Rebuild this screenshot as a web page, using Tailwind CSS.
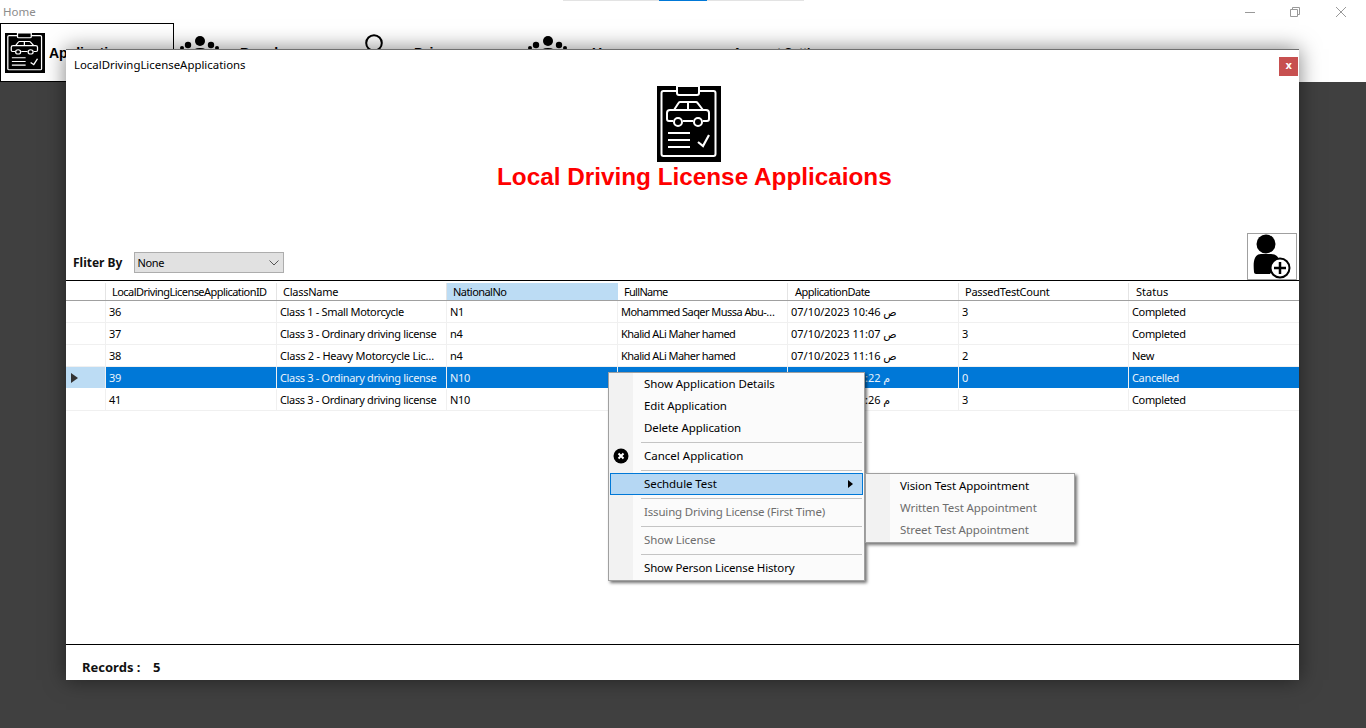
<!DOCTYPE html>
<html>
<head>
<meta charset="utf-8">
<script src="https://cdn.jsdelivr.net/npm/@tailwindcss/browser@4"></script>
</head>
<body class="m-0">
<svg width="0" height="0" class="absolute">
  <defs>
    <symbol id="lic" viewBox="0 0 64 76" preserveAspectRatio="none">
      <rect width="64" height="76" fill="#000"/>
      <rect x="4.5" y="5" width="54" height="65" rx="2" fill="none" stroke="#fff" stroke-width="2"/>
      <path d="M20 0v7a2 2 0 0 0 2 2h18a2 2 0 0 0 2-2V0z" fill="#000" stroke="#fff" stroke-width="2"/>
      <path d="M16 35h-4a2 2 0 0 1-2-2v-6a3 3 0 0 1 3-3h4l4.500-7a2 2 0 0 1 1.500-1h16a2 2 0 0 1 1.500.8l5.500 7.200h3a3 3 0 0 1 3 3v6a2 2 0 0 1-2 2h-4M26 35h10M17 24h29M31 16v8" fill="none" stroke="#fff" stroke-width="2" stroke-linejoin="round"/>
      <circle cx="21" cy="36" r="4" fill="none" stroke="#fff" stroke-width="2"/>
      <circle cx="41" cy="36" r="4" fill="none" stroke="#fff" stroke-width="2"/>
      <path d="M11 47h22M11 54h22M11 61h22" stroke="#fff" stroke-width="2"/>
      <path d="M41 56l5 4 6-11" fill="none" stroke="#fff" stroke-width="2.200"/>
    </symbol>
    <symbol id="grp" viewBox="0 0 40 20">
      <circle cx="20" cy="7" r="5"/>
      <circle cx="8" cy="11" r="3.200"/>
      <circle cx="31" cy="11" r="3.200"/>
      <circle cx="2" cy="14" r="2"/>
      <circle cx="37" cy="14" r="2"/>
      <ellipse cx="20" cy="18" rx="8" ry="4"/>
      <ellipse cx="7" cy="18" rx="4" ry="3"/>
      <ellipse cx="32" cy="18" rx="4" ry="3"/>
    </symbol>
  </defs>
</svg>

<div class="relative w-[1366px] h-[728px] overflow-hidden bg-[#404040] font-['Noto_Sans','DejaVu_Sans',sans-serif] text-[11px] tracking-[-0.34px] text-black">

  <!-- main window chrome -->
  <div class="bg-white h-[82px] flex flex-col tracking-normal">
    <div class="relative h-[23px] flex items-center justify-between pl-[3px]">
      <span class="text-[11.5px] text-[#8c8c8c]">Home</span>
      <div class="absolute left-[563px] top-0 w-[241px] h-px bg-[#e3e3e3]">
        <div class="ml-[96px] w-[48px] h-px bg-[#0078d7]"></div>
      </div>
      <div class="flex items-center gap-[35px] pr-[20px]">
        <svg width="10" height="10" viewBox="0 0 10 10"><path d="M0 5.500h10" stroke="#999"/></svg>
        <svg width="10" height="10" viewBox="0 0 10 10" fill="none" stroke="#999"><path d="M.5 2.500h7v7h-7zM2.500 2.500v-2h7v7h-2"/></svg>
        <svg class="ml-px" width="10" height="10" viewBox="0 0 10 10"><path d="M0 0l10 10M10 0L0 10" stroke="#999"/></svg>
      </div>
    </div>
    <div class="flex h-[59px] font-['Liberation_Sans',sans-serif] font-bold text-[14px]">
      <div class="w-[174px] border border-black flex items-center pl-[4px] gap-[4px]">
        <svg width="40" height="40"><use href="#lic"/></svg>
        <span class="mt-[1px]">Applications</span>
      </div>
      <div class="w-[174px] flex items-center relative">
        <svg class="absolute left-[6px] top-[11px]" width="40" height="20"><use href="#grp"/></svg>
        <span class="ml-[66px] mt-[1px]">People</span>
      </div>
      <div class="w-[174px] flex items-center relative">
        <svg class="absolute left-[17px] top-[11px]" width="18" height="18" viewBox="0 0 18 18"><circle cx="9" cy="9" r="7.800" fill="none" stroke="#000" stroke-width="2"/></svg>
        <span class="ml-[66px] mt-[1px]">Drivers</span>
      </div>
      <div class="w-[174px] flex items-center relative">
        <svg class="absolute left-[6px] top-[11px]" width="40" height="20"><use href="#grp"/></svg>
        <span class="ml-[70px] mt-[1px]">Users</span>
      </div>
      <div class="w-[174px] flex items-center">
        <span class="ml-[37px] text-[12px]">Account Settings</span>
      </div>
    </div>
  </div>

  <!-- child window -->
  <div class="absolute left-[66px] top-[49px] w-[1233px] h-[631px] bg-white border-t border-[#707070] flex flex-col shadow-[0_0_20px_rgba(0,0,0,0.5)]">
    <div class="h-[36px] flex items-start justify-between pl-[8px] pr-px pt-[7px]">
      <span class="text-[11.4px] tracking-normal leading-[16px]">LocalDrivingLicenseApplications</span>
      <div class="w-[19px] h-[19px] bg-[#c75050] text-white font-bold text-[10px] leading-[17px] text-center font-['DejaVu_Sans',sans-serif]">x</div>
    </div>
    <svg class="ml-[591px] shrink-0" width="64" height="76"><use href="#lic"/></svg>
    <div class="ml-[431px] mt-[2px] h-[26px] whitespace-nowrap font-['Liberation_Sans',sans-serif] font-bold text-[24.3px] tracking-normal leading-[26px] text-[#ff0000]">Local Driving License Applicaions</div>
    <div class="h-[90px] flex items-end justify-between pl-[7px] pr-[2px]">
      <div class="flex items-center gap-[12px] pb-[7px]">
        <span class="font-bold text-[12px] text-[#111] tracking-normal">Fliter By</span>
        <div class="w-[150px] h-[21px] bg-[#e1e1e1] border border-[#adadad] flex items-center justify-between pl-[2px] pr-[3px]">
          <span class="mt-px">None</span>
          <svg width="12" height="8" viewBox="0 0 12 8"><path d="M1.500 1.500l4.500 4.500 4.500-4.500" fill="none" stroke="#555"/></svg>
        </div>
      </div>
      <div class="w-[50px] h-[47px] border border-[#a0a0a0] bg-white">
        <svg width="48" height="45" viewBox="0 0 48 45">
          <circle cx="18" cy="10" r="9.500"/>
          <path d="M6 38c-1-10 0-18 7-18h10c5 0 8 3 8 7l-9 13H8c-1 0-2-1-2-2z"/>
          <circle cx="32" cy="34" r="9.500" fill="#fff" stroke="#000" stroke-width="2"/>
          <path d="M32 28v12M26 34h12" stroke="#000" stroke-width="2.500"/>
        </svg>
      </div>
    </div>

    <!-- grid -->
    <div class="border-t border-black">
      <div class="pt-[2px] grid grid-cols-[40px_171px_170px_171px_170px_171px_170px_1fr] h-[20px] border-b border-[#a0a0a0] leading-[17px]">
        <div class="border-r border-[#e4e4e4]"></div>
        <div class="border-r border-[#e4e4e4] pl-[6px] whitespace-nowrap overflow-hidden tracking-[-0.55px]">LocalDrivingLicenseApplicationID</div>
        <div class="border-r border-[#e4e4e4] pl-[6px] tracking-[-0.25px]">ClassName</div>
        <div class="bg-[#bcdcf4] pl-[6px] tracking-[-0.55px]">NationalNo</div>
        <div class="border-r border-[#e4e4e4] pl-[6px] tracking-[-0.7px]">FullName</div>
        <div class="border-r border-[#e4e4e4] pl-[7px] tracking-[-0.5px]">ApplicationDate</div>
        <div class="border-r border-[#e4e4e4] pl-[6px] tracking-[-0.25px]">PassedTestCount</div>
        <div class="pl-[7px] tracking-[0px]">Status</div>
      </div>
      <div class="grid grid-cols-[40px_171px_170px_171px_170px_171px_170px_1fr] h-[22px] border-b border-[#f0f0f0] leading-[21px] divide-x divide-[#f0f0f0] [&>div]:pl-[3px] [&>div]:whitespace-nowrap [&>div]:overflow-hidden">
        <div></div><div>36</div><div>Class 1 - Small Motorcycle</div><div>N1</div><div class="tracking-[-0.55px]">Mohammed Saqer Mussa Abu-…</div><div>07/10/2023 10:46 ص</div><div>3</div><div>Completed</div>
      </div>
      <div class="grid grid-cols-[40px_171px_170px_171px_170px_171px_170px_1fr] h-[22px] border-b border-[#f0f0f0] leading-[21px] divide-x divide-[#f0f0f0] [&>div]:pl-[3px] [&>div]:whitespace-nowrap [&>div]:overflow-hidden">
        <div></div><div>37</div><div>Class 3 - Ordinary driving license</div><div>n4</div><div class="tracking-[-0.55px]">Khalid ALi Maher hamed</div><div>07/10/2023 11:07 ص</div><div>3</div><div>Completed</div>
      </div>
      <div class="grid grid-cols-[40px_171px_170px_171px_170px_171px_170px_1fr] h-[22px] border-b border-[#f0f0f0] leading-[21px] divide-x divide-[#f0f0f0] [&>div]:pl-[3px] [&>div]:whitespace-nowrap [&>div]:overflow-hidden">
        <div></div><div>38</div><div class="tracking-[-0.25px]">Class 2 - Heavy Motorcycle Lic…</div><div>n4</div><div class="tracking-[-0.55px]">Khalid ALi Maher hamed</div><div>07/10/2023 11:16 ص</div><div>2</div><div>New</div>
      </div>
      <div class="grid grid-cols-[40px_171px_170px_171px_170px_171px_170px_1fr] h-[22px] border-b border-white bg-[#0078d7] text-[#eaf3fb] leading-[21px] divide-x divide-[#f0f0f0] [&>div]:pl-[3px] [&>div]:whitespace-nowrap [&>div]:overflow-hidden">
        <div class="bg-[#bcdcf4] flex items-center"><svg class="ml-[2px]" width="7" height="10" viewBox="0 0 7 10"><path d="M0 0l7 5-7 5z" fill="#333"/></svg></div><div>39</div><div>Class 3 - Ordinary driving license</div><div>N10</div><div></div><div>07/10/2023 11:22 م</div><div>0</div><div>Cancelled</div>
      </div>
      <div class="grid grid-cols-[40px_171px_170px_171px_170px_171px_170px_1fr] h-[22px] border-b border-[#f0f0f0] leading-[21px] divide-x divide-[#f0f0f0] [&>div]:pl-[3px] [&>div]:whitespace-nowrap [&>div]:overflow-hidden">
        <div></div><div>41</div><div>Class 3 - Ordinary driving license</div><div>N10</div><div></div><div>07/10/2023 11:26 م</div><div>3</div><div>Completed</div>
      </div>
    </div>

    <div class="mt-auto h-[36px] border-t border-black flex items-center pl-[16px] pt-[11px] font-bold text-[13px] text-[#111] tracking-normal">
      <span class="w-[71px]">Records :</span><span>5</span>
    </div>
  </div>

  <!-- context menu -->
  <div class="absolute left-[608px] top-[372px] w-[257px] h-[209px] bg-[#fbfbfb] border border-[#a0a0a0] shadow-[2px_2px_3px_rgba(0,0,0,0.55)] text-[11.5px] tracking-[-0.08px] py-px">
    <div class="absolute left-0 top-0 bottom-0 w-[24px] bg-[#f2f2f2]"></div>
    <div class="relative flex flex-col h-full">
      <div class="h-[22px] leading-[20px] pl-[35px]">Show Application Details</div>
      <div class="h-[22px] leading-[20px] pl-[35px]">Edit Application</div>
      <div class="h-[22px] leading-[20px] pl-[35px]">Delete Application</div>
      <div class="h-[6px] flex items-center pl-[32px] pr-[2px]"><div class="w-full h-px bg-[#c4c4c4]"></div></div>
      <div class="h-[22px] pl-[4px] flex items-center">
        <svg width="16" height="16" viewBox="0 0 16 16"><circle cx="8" cy="8" r="7.500"/><path d="M5.500 5.500l5 5M10.500 5.500l-5 5" stroke="#fff" stroke-width="2"/></svg>
        <span class="ml-[15px] -mt-[1px] tracking-[0px]">Cancel Application</span>
      </div>
      <div class="h-[6px] flex items-center pl-[32px] pr-[2px]"><div class="w-full h-px bg-[#c4c4c4]"></div></div>
      <div class="h-[22px] mx-px bg-[#b5d7f3] border border-[#0078d7] flex items-center justify-between pl-[33px] pr-[9px]">
        <span class="-mt-[2px]">Sechdule Test</span>
        <svg width="5" height="8" viewBox="0 0 5 8"><path d="M0 0l5 4-5 4z"/></svg>
      </div>
      <div class="h-[6px] flex items-center pl-[32px] pr-[2px]"><div class="w-full h-px bg-[#c4c4c4]"></div></div>
      <div class="h-[22px] leading-[22px] pl-[35px] text-[#6d6d6d] tracking-[-0.17px]">Issuing Driving License (First Time)</div>
      <div class="h-[6px] flex items-center pl-[32px] pr-[2px]"><div class="w-full h-px bg-[#c4c4c4]"></div></div>
      <div class="h-[22px] leading-[22px] pl-[35px] text-[#6d6d6d]">Show License</div>
      <div class="h-[6px] flex items-center pl-[32px] pr-[2px]"><div class="w-full h-px bg-[#c4c4c4]"></div></div>
      <div class="h-[22px] leading-[22px] pl-[35px] tracking-[-0.16px]">Show Person License History</div>
    </div>
  </div>

  <!-- submenu -->
  <div class="absolute left-[865px] top-[473px] w-[210px] h-[70px] bg-[#fbfbfb] border border-[#a0a0a0] shadow-[2px_2px_3px_rgba(0,0,0,0.55)] text-[11.5px] tracking-[-0.1px] py-px">
    <div class="absolute left-0 top-0 bottom-0 w-[24px] bg-[#f2f2f2]"></div>
    <div class="relative">
      <div class="h-[22px] leading-[22px] pl-[34px]">Vision Test Appointment</div>
      <div class="h-[22px] leading-[22px] pl-[34px] text-[#6d6d6d]">Written Test Appointment</div>
      <div class="h-[22px] leading-[22px] pl-[34px] text-[#6d6d6d]">Street Test Appointment</div>
    </div>
  </div>
</div>
</body>
</html>
